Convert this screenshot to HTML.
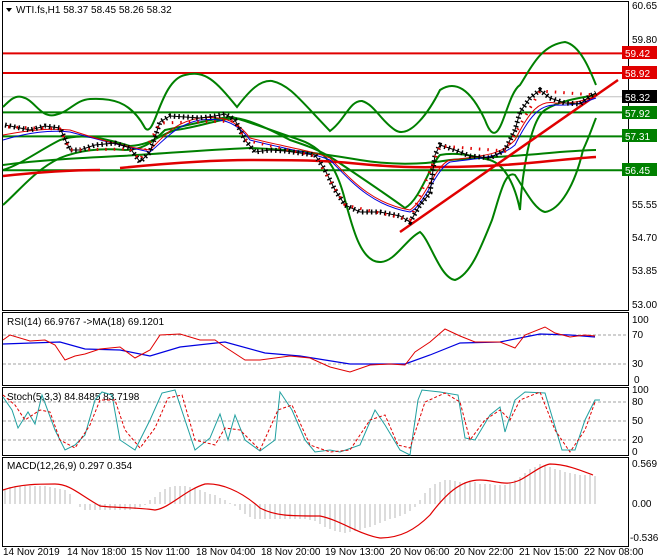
<!DOCTYPE html>
<html><head><meta charset="utf-8"><style>
body{margin:0;width:660px;height:560px;background:#fff;overflow:hidden;font-family:"Liberation Sans",sans-serif}
svg{position:absolute;left:0;top:0}
text{font-family:"Liberation Sans",sans-serif;font-size:10px;fill:#000}
</style></head><body>
<svg width="660" height="560" viewBox="0 0 660 560">
<g fill="none" stroke="#000" stroke-width="1">
<rect x="2.5" y="1.5" width="626" height="309"/>
<rect x="2.5" y="312.5" width="626" height="73"/>
<rect x="2.5" y="387.5" width="626" height="68"/>
<rect x="2.5" y="457.5" width="626" height="89"/>
</g>
<g>
<text x="632" y="9">60.65</text><text x="632" y="43">59.80</text>
<text x="632" y="208">55.55</text><text x="632" y="241">54.70</text>
<text x="632" y="274">53.85</text><text x="632" y="308">53.00</text>
</g>
<line x1="3" y1="96.7" x2="628" y2="96.7" stroke="#c0c0c0"/>
<g stroke="#e00000" stroke-width="2"><line x1="3" y1="53.4" x2="628" y2="53.4"/><line x1="3" y1="73" x2="628" y2="73"/></g>
<g stroke="#008000" stroke-width="2"><line x1="3" y1="112.4" x2="628" y2="112.4"/><line x1="3" y1="136.4" x2="628" y2="136.4"/><line x1="3" y1="170.3" x2="628" y2="170.3"/></g>
<g fill="none" stroke="#008000" stroke-width="2">
<path d="M3,107 C10,100 15,95 22,97 C35,100 40,118 55,115 C70,112 75,100 90,99 C110,98 130,100 145,128 C155,140 160,80 185,75 C205,70 215,80 237,107 C250,90 260,80 272,81 C290,85 300,100 330,131 C345,120 350,100 362,101 C375,105 380,120 395,130 C410,140 430,110 440,90 C455,80 470,88 485,120 C500,160 505,95 520,85 C530,70 540,45 565,42 C580,45 590,70 596,85"/>
<path d="M3,205 C20,190 35,170 60,158 C80,150 100,148 125,150 C140,150 150,145 165,130 C190,125 215,118 232,117 C250,122 270,130 300,140 C330,150 340,180 345,200 C352,225 360,262 380,262 C395,262 405,240 420,232 C430,240 440,278 455,280 C470,275 480,250 492,220 C500,195 505,170 515,175 C525,190 535,210 545,212 C560,210 575,185 583,150 C590,135 593,125 596,118"/>
<path d="M3,170 C20,165 40,150 60,140 C80,133 100,137 130,146 C150,145 160,135 175,130 C195,128 215,120 235,118 C250,120 265,127 290,140 C305,145 320,150 335,160 C350,170 380,190 405,208 C420,200 430,165 440,155 C455,152 470,155 490,160 C505,165 515,185 520,210 C522,175 530,120 545,110 C560,100 585,97 596,95"/>
<path d="M3,165 C40,160 80,158 120,156 C160,154 200,150 250,148 C300,150 330,155 360,160 C390,165 420,165 450,160 C480,158 520,156 560,152 C575,151 590,150 596,150"/>
</g>
<g fill="none" stroke="#e00000" stroke-width="2.5">
<path d="M3,176 C40,172 70,170 100,170"/>
<path d="M120,168 C170,163 210,160 250,160 C280,160 320,160 350,163 C380,166 410,168 440,167 C480,167 510,165 540,162 C560,160 580,158 596,157"/>
<line x1="400" y1="232" x2="618" y2="80"/>
</g>
<g fill="none" stroke-width="1">
<path stroke="#0000e0" d="M3,140 C30,132 50,130 70,132 C100,140 130,148 150,152 C165,140 175,125 200,120 C220,118 235,120 250,140 C280,148 310,152 330,160 C350,180 370,205 410,212 C425,205 435,170 450,162 C480,158 500,158 515,145 C530,115 540,105 555,105 C575,106 585,102 596,98"/>
<path stroke="#e00000" d="M3,135 C30,130 50,128 70,130 C100,140 130,148 150,150 C165,135 175,122 200,118 C220,116 235,118 250,138 C280,146 310,150 330,158 C350,178 370,203 410,210 C425,200 435,165 450,160 C480,156 500,156 515,140 C530,110 540,100 555,103 C575,104 585,100 596,96"/>
</g>
<path fill="none" stroke="#000" stroke-width="5" stroke-dasharray="1.5,3" d="M5,125 L20,128 L30,130 L45,126 L60,128 L70,150 L80,150 L95,145 L115,143 L130,148 L140,162 L150,152 L160,122 L170,116 L185,117 L200,118 L215,116 L225,114 L235,120 L245,140 L255,152 L270,150 L285,151 L300,153 L315,155 L325,170 L335,190 L345,205 L360,212 L380,212 L400,216 L410,222 L420,205 L430,193 L435,155 L440,145 L455,150 L470,156 L490,158 L505,150 L515,130 L520,112 L530,98 L540,90 L550,98 L565,103 L580,104 L590,96 L596,93"/>
<path fill="none" stroke="#000" stroke-width="1" d="M5,125 L20,128 L30,130 L45,126 L60,128 L70,150 L80,150 L95,145 L115,143 L130,148 L140,162 L150,152 L160,122 L170,116 L185,117 L200,118 L215,116 L225,114 L235,120 L245,140 L255,152 L270,150 L285,151 L300,153 L315,155 L325,170 L335,190 L345,205 L360,212 L380,212 L400,216 L410,222 L420,205 L430,193 L435,155 L440,145 L455,150 L470,156 L490,158 L505,150 L515,130 L520,112 L530,98 L540,90 L550,98 L565,103 L580,104 L590,96 L596,93"/>
<path fill="none" stroke="#e00000" stroke-width="3" stroke-dasharray="1.5,7" d="M8,127 L60,129 L70,150 L130,149 L140,160 L160,123 L235,121 L245,140 L315,156 L345,205 L410,220 L440,146 L505,151 L540,91 L596,95"/>
<g font-size="10">
<rect x="622" y="46" width="35" height="13" fill="#e00000"/><text x="625" y="57" style="fill:#fff">59.42</text>
<rect x="622" y="66" width="35" height="13" fill="#e00000"/><text x="625" y="77" style="fill:#fff">58.92</text>
<rect x="622" y="90" width="35" height="13" fill="#000"/><text x="625" y="101" style="fill:#fff">58.32</text>
<rect x="622" y="106" width="35" height="13" fill="#008000"/><text x="625" y="117" style="fill:#fff">57.92</text>
<rect x="622" y="129" width="35" height="13" fill="#008000"/><text x="625" y="140" style="fill:#fff">57.31</text>
<rect x="622" y="163" width="35" height="13" fill="#008000"/><text x="625" y="174" style="fill:#fff">56.45</text>
</g>
<path d="M6,8 L12,8 L9,12Z" fill="#000"/>
<text x="16" y="13">WTI.fs,H1  58.37 58.45 58.26 58.32</text>
<g stroke="#a0a0a0" stroke-dasharray="3,2"><line x1="3" y1="335" x2="628" y2="335"/><line x1="3" y1="364" x2="628" y2="364"/>
<line x1="3" y1="402" x2="628" y2="402"/><line x1="3" y1="421" x2="628" y2="421"/><line x1="3" y1="440" x2="628" y2="440"/></g>
<text x="7" y="325">RSI(14) 66.9767  -&gt;MA(18) 69.1201</text>
<text x="632" y="323">100</text><text x="632" y="338">70</text><text x="632" y="367">30</text><text x="634" y="383">0</text>
<path fill="none" stroke="#0000e0" stroke-width="1.2" d="M3,344 L60,342 L85,349 L120,350 L150,356 L180,347 L225,342 L265,353 L300,356 L350,364 L405,364 L430,355 L460,343 L500,342 L540,334 L570,335 L595,337"/>
<path fill="none" stroke="#e00000" stroke-width="1" d="M3,340 L10,335 L30,341 L45,340 L55,345 L65,360 L75,356 L85,354 L100,349 L120,347 L135,358 L150,350 L160,335 L180,334 L200,340 L215,340 L225,347 L245,360 L260,360 L290,356 L310,358 L330,367 L350,372 L370,365 L390,364 L405,365 L415,352 L430,342 L445,329 L460,336 L475,342 L500,342 L515,348 L525,335 L545,327 L555,333 L570,337 L585,335 L595,336"/>
<text x="7" y="400">Stoch(5,3,3) 84.8485 83.7198</text>
<text x="632" y="393">100</text><text x="632" y="405">80</text><text x="632" y="424">50</text><text x="632" y="443">20</text><text x="632" y="455">0</text>
<path fill="none" stroke="#20a0a0" stroke-width="1" d="M3,397 L12,410 L18,428 L28,412 L35,424 L42,395 L55,430 L65,450 L75,445 L85,435 L95,400 L102,392 L112,395 L120,440 L135,450 L150,420 L162,393 L175,390 L185,420 L195,450 L210,438 L220,414 L228,440 L235,415 L245,440 L260,451 L275,440 L280,392 L292,410 L305,440 L315,452 L330,450 L340,452 L360,445 L375,410 L385,425 L400,450 L410,455 L418,400 L422,390 L440,392 L458,395 L465,438 L475,440 L490,415 L500,407 L505,432 L515,400 L525,392 L545,393 L562,450 L575,450 L585,420 L595,400 L600,400"/>
<path fill="none" stroke="#e00000" stroke-width="1" stroke-dasharray="3,2" d="M3,395 L15,405 L25,420 L40,410 L50,412 L60,440 L75,448 L90,425 L100,400 L115,400 L125,430 L140,448 L155,428 L168,398 L182,395 L195,440 L215,445 L225,428 L240,430 L260,450 L278,410 L292,405 L310,445 L330,452 L350,450 L370,420 L385,415 L398,445 L410,448 L425,402 L445,393 L460,402 L470,440 L485,420 L500,410 L510,420 L520,400 L540,392 L555,430 L570,452 L585,430 L595,402"/>
<text x="7" y="469">MACD(12,26,9) 0.297 0.354</text>
<text x="632" y="467">0.569</text><text x="632" y="507">0.00</text><text x="630" y="541">-0.536</text>
<g stroke="#b8b8b8" stroke-width="1">
<path d="M5,504V490M10,504V487M15,504V486M20,504V486M25,504V486M30,504V486M35,504V486M40,504V486M45,504V486M50,504V487M55,504V488M60,504V489M65,504V490M70,504V494M80,504V507M85,504V510M90,504V510M95,504V510M100,504V510M105,504V510M110,504V510M115,504V510M120,504V510M125,504V510M130,504V510M135,504V509M140,504V507M145,504V505M150,504V500M155,504V497M160,504V492M165,504V489M170,504V487M175,504V486M180,504V486M185,504V486M190,504V487M195,504V488M200,504V490M205,504V492M210,504V494M215,504V495M220,504V498M225,504V500M230,504V503M235,504V506M240,504V510M245,504V514M250,504V517M255,504V519M260,504V519M265,504V519M270,504V519M275,504V519M280,504V519M285,504V519M290,504V519M295,504V519M300,504V519M305,504V519M310,504V520M315,504V521M320,504V524M325,504V527M330,504V529M335,504V531M340,504V532M345,504V533M350,504V532M355,504V531M360,504V530M365,504V528M370,504V527M375,504V525M380,504V523M385,504V521M390,504V519M395,504V518M400,504V516M405,504V514M410,504V511M415,504V507M420,504V500M425,504V493M430,504V488M435,504V484M440,504V482M445,504V480M450,504V480M455,504V481M460,504V482M465,504V482M470,504V482M475,504V482M480,504V484M485,504V484M490,504V484M495,504V485M500,504V485M505,504V485M510,504V483M515,504V480M520,504V477M525,504V473M530,504V469M535,504V467M540,504V464M545,504V465M550,504V467M555,504V469M560,504V470M565,504V472M570,504V473M575,504V474M580,504V475M585,504V475M590,504V475M595,504V476"/>
</g>
<path fill="none" stroke="#e00000" stroke-width="1.2" d="M3,490 C20,484 40,484 55,484 C70,484 80,495 100,506 C115,508 135,507 155,510 C170,508 185,490 205,484 C220,483 240,490 260,508 C275,516 290,516 320,516 C340,520 360,535 380,538 C400,538 415,530 430,515 C445,495 460,480 480,480 C495,480 505,487 520,480 C530,475 540,466 550,464 C565,464 580,470 593,475"/>
<g>
<text x="3" y="555">14 Nov 2019</text><text x="67" y="555">14 Nov 18:00</text><text x="131" y="555">15 Nov 11:00</text><text x="196" y="555">18 Nov 04:00</text><text x="261" y="555">18 Nov 20:00</text><text x="325" y="555">19 Nov 13:00</text><text x="390" y="555">20 Nov 06:00</text><text x="454" y="555">20 Nov 22:00</text><text x="519" y="555">21 Nov 15:00</text><text x="584" y="555">22 Nov 08:00</text>
</g>
</svg>
</body></html>
